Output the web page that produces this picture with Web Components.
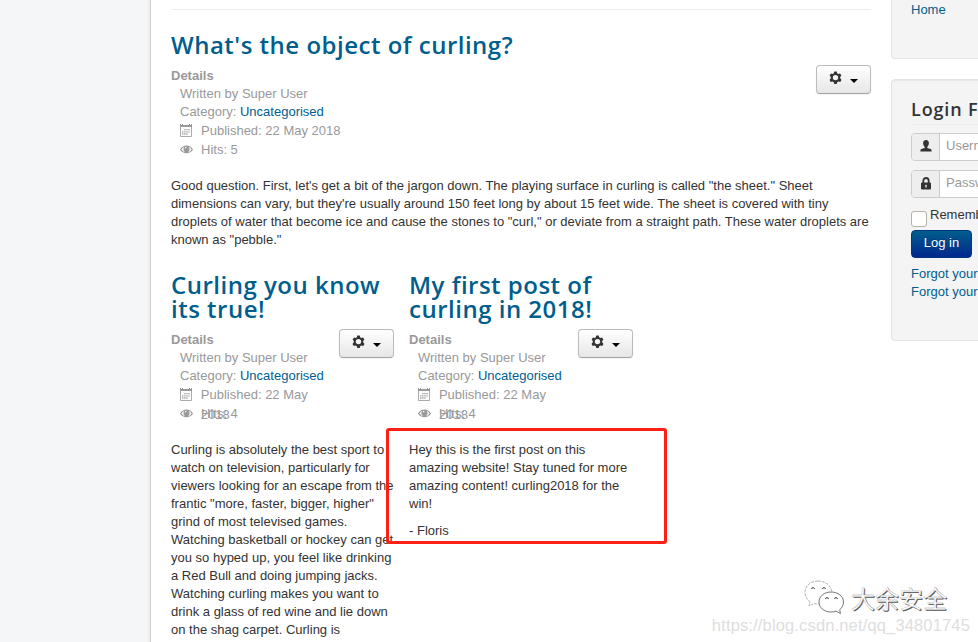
<!DOCTYPE html>
<html lang="en"><head><meta charset="utf-8"><title>Blog</title>
<style>
html,body{margin:0;height:642px;overflow:hidden;background:#f4f6f7}
body{font:13px/18px "Liberation Sans",Arial,sans-serif;color:#333;position:relative}
</style></head><body>
<blog-page></blog-page>
<script>
const define=(name,html,setup)=>customElements.define(name,class extends HTMLElement{
  constructor(){super();this.attachShadow({mode:'open'})}
  connectedCallback(){this.shadowRoot.innerHTML=html;if(setup)setup(this,this.shadowRoot)}
});
const icons={
 gear:'<svg width="13" height="14" viewBox="0 0 13 14"><path fill="#333" fill-rule="evenodd" d="M5.3.5h2.4l.5 1.8 1.1.6L11 2.4l1.4 2-1.2 1.5v1.3L12.5 9l-1.3 2-1.9-.4-1.1.6-.5 1.8H5.300l-.5-1.8-1.100-.6-1.900.4L.5 9l1.300-1.800V5.900L.6 4.400l1.400-2 1.700.5 1.100-.6zM6.500 3.900a2.700 2.700 0 1 0 0 5.400 2.700 2.700 0 0 0 0-5.400z"/></svg>',
 calendar:'<svg width="12" height="13" viewBox="0 0 12 13"><path fill="#999" d="M0 0h1v1h1V0h1v1h6V0h1v1h1V0h1v3H0z"/><path fill="none" stroke="#aaa" d="M.5 3v9.500h11V3"/><path stroke="#999" stroke-width="1.300" stroke-dasharray="1.300 .8" d="M4.200 5.600H10M2.100 7.800H10M2.100 10H8.200"/></svg>',
 eye:'<svg width="13" height="9" viewBox="0 0 13 9"><path fill="#999" fill-rule="evenodd" d="M0 4.500C3-.8 10-.8 13 4.500 10 9.500 3 9.500 0 4.500zM1.500 4.500c1 1.500 2.300 2.500 3.500 2.800C3 5.500 3 3 4.400 1.600 3.200 2.200 2.200 3.200 1.500 4.500zM8.600 1.600C10 3 10 5.500 8 7.300c1.500-.4 2.700-1.400 3.500-2.800-.8-1.400-1.800-2.400-2.900-2.900zM6.200 1.800a1.300 1.300 0 0 0-1.300 1.500h1.500z"/></svg>',
 user:'<svg width="12" height="12" viewBox="0 0 12 12"><path fill="#333" d="M6 0c2 0 3 1.400 2.900 3.300C8.800 5 8 6.200 7.300 6.900v1.200l3.300 1c.8.300 1 .9 1 2.400H.4c0-1.500.2-2.100 1-2.400l3.300-1V6.900C4 6.200 3.200 5 3.100 3.300 3 1.400 4 0 6 0z"/></svg>',
 lock:'<svg width="10" height="13" viewBox="0 0 10 13"><path fill="none" stroke="#333" stroke-width="1.800" d="M2.300 6V4C2.300 0 7.700 0 7.700 4v2"/><path fill="#333" fill-rule="evenodd" d="M.7 5.500h8.600l.7.700v5.600l-.7.700H.7l-.7-.7V6.200zM5 7.800a1 1 0 0 0-.5 1.800v1.200h1V9.600A1 1 0 0 0 5 7.800z"/></svg>',
 wechat:'<svg width="41" height="36" viewBox="0 0 41 36" fill="#fff" stroke="#888" stroke-width=".9"><path stroke="#aaa" stroke-dasharray="3 1" d="M14 1C6.500 1 1 6 1 12.500c0 4 2 7 5 9.200L5 26l5-2.500c2 .5 6 .8 8 .2L28 12C27 5 21 1 14 1z"/><path stroke="#666" d="M27 12c-7 0-12 4.500-12 10s5 10 12 10c2 0 3.500-.2 5-.8l4.500 2.300-.8-3.800C38 28 39.500 25 39.500 22c0-5.500-5.500-10-12.500-10z"/><path fill="none" stroke="#555" stroke-width="1.200" d="M7.500 9q1.500-3 3 0M18.500 9q1.500-3 3 0M21.500 19q1.500-3 3 0M30.500 19q1.500-3 3 0"/></svg>'
};
define('ui-icon','<style>:host{display:inline-flex}svg{display:block}</style>',(e,r)=>r.innerHTML+=icons[e.getAttribute('name')]);

define('gear-button',`<style>:host{box-sizing:border-box;display:flex;width:55px;height:29px;border:1px solid #bbb;border-bottom-color:#a2a2a2;border-radius:4px;background:linear-gradient(#fff,#e6e6e6);box-shadow:0 1px 2px rgba(0,0,0,.05);padding:5px 12px 0;gap:8px}
i{border:4px solid transparent;border-top-color:#000;border-bottom:0;width:0;height:0;margin-top:8px}</style><ui-icon name="gear"></ui-icon><i></i>`);

define('post-item',`<style>:host{display:block}
h2{margin:0 0 10px;font:600 24px/24px "Open Sans",sans-serif;letter-spacing:var(--ls,.5px);color:#005e8d;white-space:nowrap}
.meta{display:flex;justify-content:space-between;align-items:flex-start;color:#999;height:92px}
gear-button{margin-top:-2px}
b,.d{display:block}.d{padding-left:9px}.ic{display:flex;height:19px;line-height:20px}.ic ui-icon{width:21px;padding-top:3px}.ic.e ui-icon{padding-top:5px}
span{color:#005e8d}
.body{padding-top:18px;white-space:nowrap}</style>
<h2><slot name="title"></slot></h2>
<div class="meta"><div><b>Details</b><div class="d">Written by Super User</div><div class="d">Category: <span>Uncategorised</span></div><div class="d ic"><ui-icon name="calendar"></ui-icon>Published: 22 May 2018</div><div class="d ic e"><ui-icon name="eye"></ui-icon><a></a></div></div><gear-button></gear-button></div>
<div class="body"><slot></slot></div>`,(e,r)=>r.querySelector('a').textContent='Hits: '+e.getAttribute('hits'));

define('side-well',`<style>:host{box-sizing:border-box;display:block;border:1px solid #e3e3e3;border-radius:4px;background:#f4f4f4;box-shadow:inset 0 1px 1px rgba(0,0,0,.05);padding:19px}</style><slot></slot>`);

define('icon-field',`<style>:host{display:flex;box-sizing:border-box;height:28px;border:1px solid #ccc;border-radius:4px;background:#fff;color:#999;margin-bottom:9px;overflow:hidden}
div{width:28px;box-sizing:border-box;border-right:1px solid #ccc;background:#eee;display:flex;justify-content:center;padding-top:6px}
span{padding:3px 6px}</style><div><ui-icon></ui-icon></div><span><slot></slot></span>`,(e,r)=>{const i=document.createElement('ui-icon');i.setAttribute('name',e.getAttribute('icon'));r.querySelector('ui-icon').replaceWith(i)});

define('login-form',`<style>:host{display:block}
h3{margin:0 0 8px;padding-bottom:4px;height:21px;font:600 18px/21px "Open Sans",sans-serif;letter-spacing:.85px;border-bottom:1px solid #eee;white-space:nowrap}
.r{display:flex;gap:3px;height:23px;margin-top:-1px;align-items:flex-start;padding-top:1px}
i{box-sizing:border-box;width:16px;height:16px;background:#fff;border:1px solid #b6b1aa;border-radius:3px;margin-top:4px}
.r span{margin-top:-1px}
button{display:block;box-sizing:border-box;width:61px;height:28px;border:1px solid #003580;border-radius:4px;background:linear-gradient(#005e8d,#00278d);color:#fff;font:13px/18px "Liberation Sans",sans-serif;padding:3px 0 5px;text-shadow:0 -1px 0 rgba(0,0,0,.25);margin-bottom:7px}
a{display:block;color:#005e8d;white-space:nowrap}</style>
<h3>Login Form</h3><icon-field icon="user">Username</icon-field><icon-field icon="lock">Password</icon-field>
<div class="r"><i></i><span>Remember</span></div><button>Log in</button><a>Forgot your username?</a><a>Forgot your password?</a>`);

define('water-mark',`<style>:host{display:block;position:absolute;right:8px;bottom:7px;text-align:right;pointer-events:none}
.n{display:flex;gap:6px;justify-content:flex-end;align-items:center;padding-right:23px;height:36px;font:24px/36px "Noto Sans CJK SC",sans-serif;color:#fff;text-shadow:1px 1px 0 #555;-webkit-text-stroke:.3px #999}
.u{font:16.500px/19px "Liberation Sans",sans-serif;color:#dedede;letter-spacing:.15px;white-space:nowrap}</style><div class="n"><ui-icon name="wechat"></ui-icon><span>大余安全</span></div><div class="u">https://blog.csdn.net/qq_34801745</div>`);

define('red-frame',`<style>:host{position:absolute;left:386px;top:428px;width:281px;height:116px;box-sizing:border-box;border:3px solid #ff1f14;border-radius:3px}</style>`);

define('blog-page',`<style>:host{display:grid;grid-template-columns:150px 720px 221px;height:642px;overflow:hidden;width:1132px;grid-template-columns:150px 741px 221px;background:linear-gradient(90deg,#f4f6f7 146px,#eceeef 150px,#ccc 150px,#ccc 151px,#fff 151px)}
main{grid-column:2;padding:9px 20px 0 21px}
hr{border:0;border-top:1px solid #eee;margin:0 0 23px}
.two{display:grid;grid-template-columns:223px 224px;gap:15px;margin-top:24px}
p{margin:0 0 9px}aside{display:flex;flex-direction:column;gap:20px}
.home{height:59px;padding-top:1px;border-top:0;border-radius:0 0 4px 4px;color:#005e8d;box-shadow:none}
.login{height:262px}</style>
<main><hr><post-item hits="5"><span slot="title">What's the object of curling?</span>Good question. First, let's get a bit of the jargon down. The playing surface in curling is called "the sheet." Sheet<br>dimensions can vary, but they're usually around 150 feet long by about 15 feet wide. The sheet is covered with tiny<br>droplets of water that become ice and cause the stones to "curl," or deviate from a straight path. These water droplets are<br>known as "pebble."</post-item>
<div class="two"><post-item hits="4"><span slot="title">Curling you know<br>its true!</span>Curling is absolutely the best sport to<br>watch on television, particularly for<br>viewers looking for an escape from the<br>frantic "more, faster, bigger, higher"<br>grind of most televised games.<br>Watching basketball or hockey can get<br>you so hyped up, you feel like drinking<br>a Red Bull and doing jumping jacks.<br>Watching curling makes you want to<br>drink a glass of red wine and lie down<br>on the shag carpet. Curling is</post-item>
<post-item hits="4"><span slot="title">My first post of<br>curling in 2018!</span><p>Hey this is the first post on this<br>amazing website! Stay tuned for more<br>amazing content! curling2018 for the<br>win!</p><p>- Floris</p></post-item></div></main>
<aside><side-well class="home">Home</side-well><side-well class="login"><login-form></login-form></side-well></aside>
<red-frame></red-frame>`);
</script>
<water-mark></water-mark>
</body></html>
